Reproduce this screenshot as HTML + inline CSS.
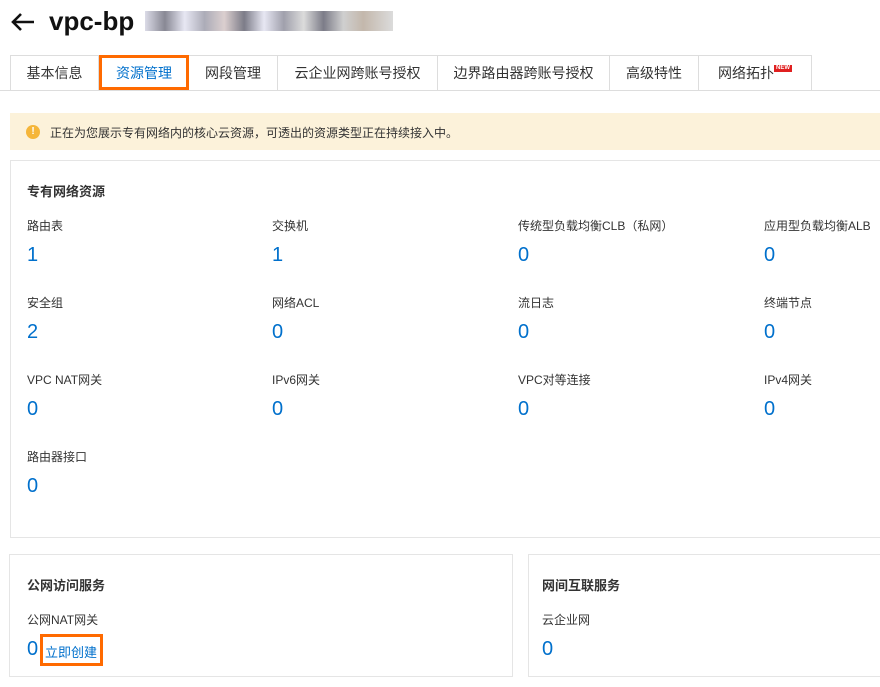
<!DOCTYPE html>
<html><head><meta charset="utf-8"><style>
*{margin:0;padding:0;box-sizing:border-box}
body{width:880px;height:687px;overflow:hidden;background:#fff;font-family:"Liberation Sans","Noto Sans CJK SC",sans-serif;color:#333;position:relative}
.a{position:absolute;white-space:nowrap}
.tabs{position:absolute;left:10px;top:55px;height:36px;display:flex;border-top:1px solid #ddd;border-left:1px solid #ddd}
.tab{height:35px;border-right:1px solid #ddd;border-bottom:1px solid #ddd;font-size:14px;color:#333;display:flex;align-items:center;justify-content:center}
.lbl{font-size:12px;color:#333}
.val{font-size:20px;color:#0070cc}
.card{position:absolute;border:1px solid #e5e5e5}
.h{font-size:13px;font-weight:bold;color:#333}
</style></head><body>
<svg class="a" style="left:10px;top:12px" width="26" height="20" viewBox="0 0 26 20"><path d="M24 10H3M11 2L3 10l8 8" stroke="#111" stroke-width="2.6" fill="none"/></svg>
<div class="a" style="left:49px;top:6px;font-size:26px;font-weight:bold;color:#111">vpc-bp</div>
<div class="a" style="left:145px;top:11px;width:248px;height:20px;background:linear-gradient(90deg,#ccd 0,#556 8%,#dde 16%,#889 24%,#cbb 32%,#445 40%,#dde 48%,#778 56%,#ccc 64%,#445 72%,#bbb 80%,#a98 88%,#ccc 100%);opacity:.7"></div>
<div class="tabs">
<div class="tab" style="width:88px">基本信息</div>
<div class="tab" style="width:90px;color:#0070cc;border:3px solid #ff6a00;margin-top:-1px;height:35px">资源管理</div>
<div class="tab" style="width:89px">网段管理</div>
<div class="tab" style="width:160px">云企业网跨账号授权</div>
<div class="tab" style="width:172px">边界路由器跨账号授权</div>
<div class="tab" style="width:89px">高级特性</div>
<div class="tab" style="width:113px">网络拓扑<span style="background:#e02020;color:#fff;font-size:6px;font-weight:bold;padding:0 2px;margin-top:-10px;line-height:7px">NEW</span></div>
</div>
<div class="a" style="left:0;top:90px;width:880px;height:1px;background:#ddd"></div>
<div class="a" style="left:10px;top:113px;width:870px;height:37px;background:#fcf2da"></div>
<div class="a" style="left:26px;top:125px;width:14px;height:14px;border-radius:7px;background:#f5b63a;color:#fff;font-size:10px;font-weight:bold;text-align:center;line-height:14px">!</div>
<div class="a" style="left:50px;top:124px;font-size:12px;color:#333">正在为您展示专有网络内的核心云资源，可透出的资源类型正在持续接入中。</div>
<div class="card" style="left:10px;top:160px;width:880px;height:378px"></div>
<div class="a h" style="left:27px;top:181px">专有网络资源</div>
<div class="a lbl" style="left:27px;top:217px">路由表</div><div class="a val" style="left:27px;top:244px">1</div>
<div class="a lbl" style="left:272px;top:217px">交换机</div><div class="a val" style="left:272px;top:244px">1</div>
<div class="a lbl" style="left:518px;top:217px">传统型负载均衡CLB（私网）</div><div class="a val" style="left:518px;top:244px">0</div>
<div class="a lbl" style="left:764px;top:217px">应用型负载均衡ALB</div><div class="a val" style="left:764px;top:244px">0</div>
<div class="a lbl" style="left:27px;top:294px">安全组</div><div class="a val" style="left:27px;top:321px">2</div>
<div class="a lbl" style="left:272px;top:294px">网络ACL</div><div class="a val" style="left:272px;top:321px">0</div>
<div class="a lbl" style="left:518px;top:294px">流日志</div><div class="a val" style="left:518px;top:321px">0</div>
<div class="a lbl" style="left:764px;top:294px">终端节点</div><div class="a val" style="left:764px;top:321px">0</div>
<div class="a lbl" style="left:27px;top:371px">VPC NAT网关</div><div class="a val" style="left:27px;top:398px">0</div>
<div class="a lbl" style="left:272px;top:371px">IPv6网关</div><div class="a val" style="left:272px;top:398px">0</div>
<div class="a lbl" style="left:518px;top:371px">VPC对等连接</div><div class="a val" style="left:518px;top:398px">0</div>
<div class="a lbl" style="left:764px;top:371px">IPv4网关</div><div class="a val" style="left:764px;top:398px">0</div>
<div class="a lbl" style="left:27px;top:448px">路由器接口</div><div class="a val" style="left:27px;top:475px">0</div>
<div class="card" style="left:9px;top:554px;width:504px;height:123px"></div>
<div class="a h" style="left:27px;top:575px">公网访问服务</div>
<div class="a lbl" style="left:27px;top:611px">公网NAT网关</div>
<div class="a val" style="left:27px;top:638px">0</div>
<div class="a" style="left:40px;top:634px;height:32px;border:3px solid #ff6a00;width:63px"></div>
<div class="a" style="left:45px;top:642px;font-size:13px;color:#0070cc">立即创建</div>
<div class="card" style="left:528px;top:554px;width:360px;height:123px"></div>
<div class="a h" style="left:542px;top:575px">网间互联服务</div>
<div class="a lbl" style="left:542px;top:611px">云企业网</div>
<div class="a val" style="left:542px;top:638px">0</div>
</body></html>
